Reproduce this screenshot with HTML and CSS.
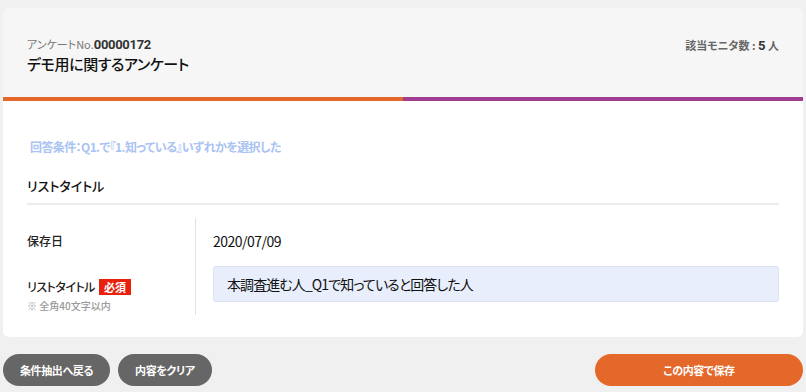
FILE: index.html
```html
<!DOCTYPE html>
<html lang="ja">

<head>
    <meta charset="UTF-8">
    <title>リスト保存</title>
    <link rel="stylesheet" href="styles.css">
</head>

<body>
    <div class="card">
        <div class="card-head">
            <div class="head-left">
                <p class="survey-no">アンケートNo.<span>00000172</span></p>
                <h1 class="survey-title">デモ用に関するアンケート</h1>
            </div>
            <p class="monitor-count">該当モニタ数 : <span>5</span> 人</p>
        </div>
        <div class="head-bar"></div>

        <div class="card-body">
            <p class="condition">回答条件：Q1.で『1.知っている』いずれかを選択した</p>
            <h2 class="section-title">リストタイトル</h2>

            <div class="form-table">
                <div class="form-labels">
                    <div class="label-row">保存日</div>
                    <div class="label-row label-title">
                        <div class="label-line">リストタイトル<span class="required">必須</span></div>
                        <p class="note">※ 全角40文字以内</p>
                    </div>
                </div>
                <div class="form-values">
                    <div class="value-row">2020/07/09</div>
                    <div class="value-input">本調査進む人_Q1で知っていると回答した人</div>
                </div>
            </div>
        </div>
    </div>

    <div class="actions">
        <button class="btn btn-gray">条件抽出へ戻る</button>
        <button class="btn btn-gray">内容をクリア</button>
        <button class="btn btn-save">この内容で保存</button>
    </div>
</body>

</html>
```

FILE: styles.css
```css
body {
    margin: 0;
    padding: 8px 3px 0;
    background-color: #f0f0f0;
    font-family: "Noto Sans CJK JP", "Noto Sans", sans-serif;
    font-feature-settings: "palt";
    color: #222;
}

p,
h1,
h2 {
    margin: 0;
}

.card {
    background-color: #fff;
    border-radius: 6px;
    overflow: hidden;
}

.card-head {
    background-color: #f6f6f6;
    height: 89px;
    padding: 28px 24px 0;
    display: flex;
    justify-content: space-between;
    align-items: flex-start;
    box-sizing: border-box;
}

.survey-no {
    font-size: 11px;
    color: #777;
    line-height: 16px;
}

.survey-no span {
    font-family: Roboto, "Noto Sans CJK JP", sans-serif;
    font-size: 13px;
    font-weight: bold;
    color: #333;
    letter-spacing: -0.3px;
}

.survey-title {
    font-size: 15px;
    font-weight: 500;
    color: #111;
    margin-top: 1px;
    line-height: 20px;
    letter-spacing: -0.4px;
}

.monitor-count {
    font-size: 11px;
    font-weight: bold;
    color: #666;
    line-height: 16px;
    margin-top: 1px;
}

.monitor-count span {
    font-family: Roboto, "Noto Sans CJK JP", sans-serif;
    font-size: 13px;
    color: #333;
}

.head-bar {
    height: 4px;
    background: linear-gradient(to right, #e4682a 50%, #a03d90 50%);
}

.card-body {
    padding: 38px 24px 22px;
}

.condition {
    font-size: 12px;
    font-weight: bold;
    color: #a9c3f2;
    padding-left: 3px;
    line-height: 16px;
    letter-spacing: -0.6px;
}

.section-title {
    font-size: 13px;
    font-weight: 500;
    color: #111;
    margin-top: 21px;
    padding-bottom: 7px;
    border-bottom: 2px solid #ececec;
    line-height: 20px;
}

.form-table {
    display: flex;
    margin-top: 13px;
}

.form-labels {
    width: 168px;
    border-right: 1px solid #e2e2e2;
    font-size: 12px;
    font-weight: 500;
    color: #222;
}

.label-row {
    height: 45px;
    display: flex;
    align-items: center;
}

.label-title {
    flex-direction: column;
    align-items: flex-start;
    justify-content: flex-start;
    height: 52px;
    padding-top: 15px;
    box-sizing: border-box;
}

.label-line {
    display: flex;
    align-items: center;
    letter-spacing: -0.5px;
}

.required {
    display: inline-block;
    background-color: #e8200c;
    color: #fff;
    font-size: 11px;
    font-weight: bold;
    padding: 0 5px;
    margin-left: 4px;
    line-height: 16px;
    letter-spacing: 0;
}

.note {
    font-size: 10px;
    color: #999;
    font-weight: 500;
    margin-top: 3px;
}

.form-values {
    flex: 1;
    padding-left: 17px;
}

.value-row {
    height: 45px;
    display: flex;
    align-items: center;
    font-size: 14px;
    color: #111;
    letter-spacing: -0.5px;
}

.value-input {
    margin-top: 3px;
    height: 36px;
    box-sizing: border-box;
    background-color: #e8eefc;
    border: 1px solid #dbe1ee;
    border-radius: 3px;
    padding: 0 13px;
    display: flex;
    align-items: center;
    font-size: 14px;
    color: #111;
    letter-spacing: -0.9px;
}

.actions {
    display: flex;
    gap: 8px;
    margin-top: 17px;
}

.btn {
    height: 32px;
    border: none;
    border-radius: 16px;
    font-family: "Noto Sans CJK JP", sans-serif;
    font-feature-settings: "palt";
    font-size: 11px;
    font-weight: bold;
    color: #fff;
    letter-spacing: -0.4px;
    cursor: pointer;
}

.btn-gray {
    background-color: #666;
    padding: 0 17px;
}

.btn-save {
    background-color: #e4682a;
    width: 208px;
    margin-left: auto;
}
```
